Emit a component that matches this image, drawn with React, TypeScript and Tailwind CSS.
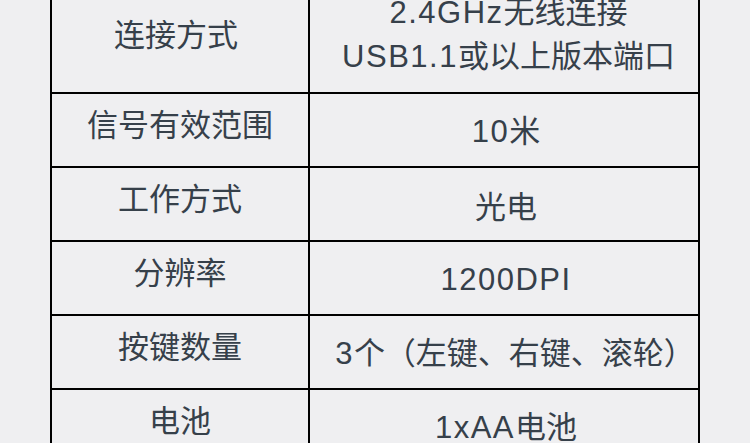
const rows: { label: string; value: string; pad: string }[] = [
  { label: "信号有效范围", value: "10米", pad: "pl-[4px]" },
  { label: "工作方式", value: "光电", pad: "pl-[4px]" },
  { label: "分辨率", value: "1200DPI", pad: "pl-[4px]" },
  { label: "按键数量", value: "3个（左键、右键、滚轮）", pad: "pl-[22px]" },
  { label: "电池", value: "1xAA电池", pad: "pl-[4px]" },
];

// latin runs get a looser Arial-like face so widths match the shot
function Txt({ s }: { s: string }) {
  const parts = s.split(/([\x20-\x7E]+)/).filter(Boolean);
  return (
    <span>
      {parts.map((p, i) =>
        /^[\x20-\x7E]+$/.test(p) ? (
          <span key={i} className="tracking-[1.5px]" style={{ fontFamily: '"Liberation Sans", sans-serif' }}>
            {p}
          </span>
        ) : (
          <span key={i}>{p}</span>
        )
      )}
    </span>
  );
}

export default function App() {
  return (
    <div
      className="w-[750px] h-[443px] overflow-hidden bg-[#efeff1] text-[#36404a] text-[31px] leading-[41px]"
      style={{ fontFamily: '"Noto Sans CJK SC", sans-serif' }}
    >
      <div className="w-[650px] mx-auto -mt-[23px] border-x-2 border-black">
        <div className="flex h-[117px] border-b-2 border-black">
          <div className="w-[258px] flex items-center justify-center border-r-2 border-black pb-[5px] pr-[8px]">
            连接方式
          </div>
          <div className="flex-1 flex flex-col items-center justify-center pl-[9px] pb-[4px]">
            <Txt s="2.4GHz无线连接" />
            <Txt s="USB1.1或以上版本端口" />
          </div>
        </div>
        {rows.map((r) => (
          <div key={r.label} className="flex h-[74px] border-b-2 border-black">
            <div className="w-[258px] flex items-center justify-center border-r-2 border-black pb-[16px]">
              {r.label}
            </div>
            <div className={`flex-1 flex items-center justify-center ${r.pad}`}>
              <Txt s={r.value} />
            </div>
          </div>
        ))}
      </div>
    </div>
  );
}
